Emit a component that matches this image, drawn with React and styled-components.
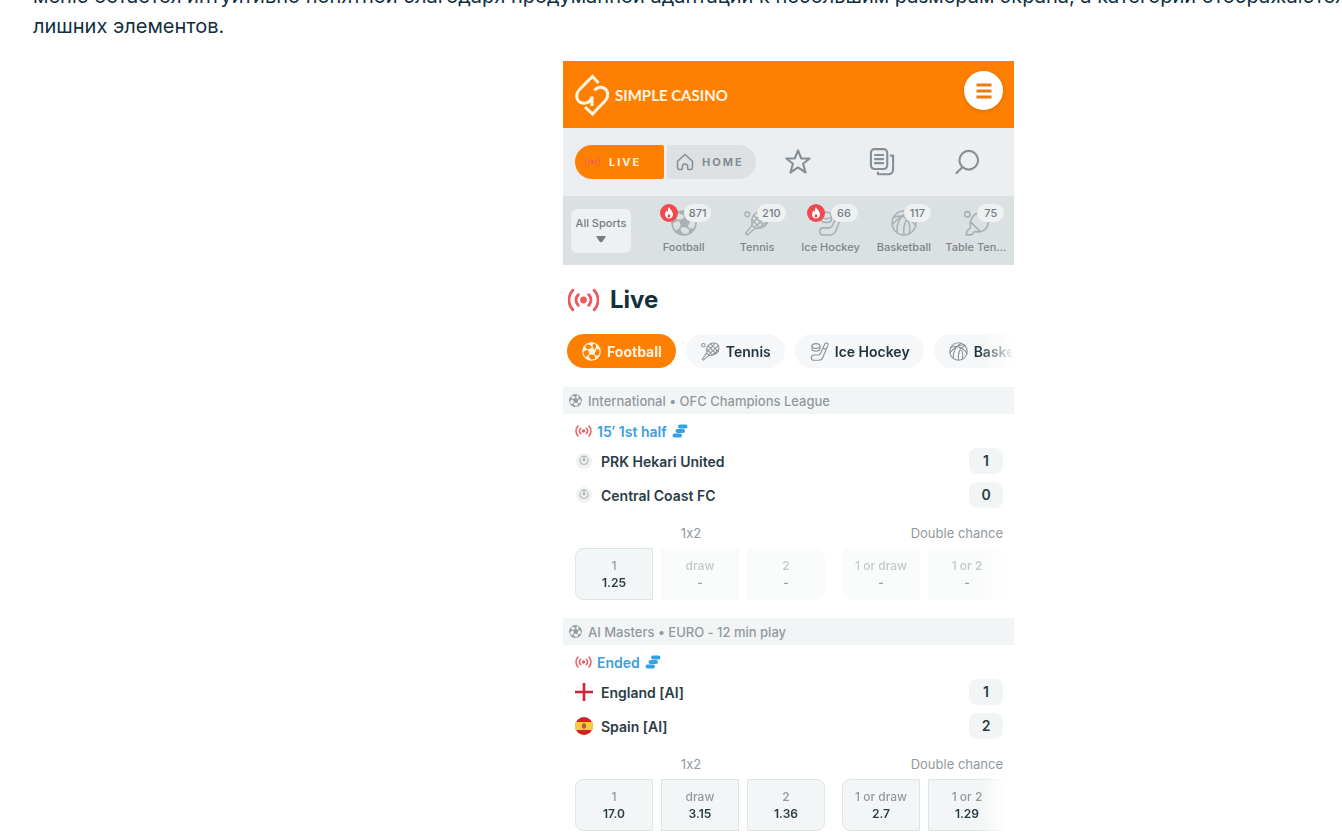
import styled, { createGlobalStyle } from "styled-components";
import React from "react";

const GlobalStyle = createGlobalStyle`
  * {
    box-sizing: border-box;
  }
  body {
    margin: 0;
    background: #ffffff;
    color: #10303f;
    font-family: "Inter", "Liberation Sans", sans-serif;
    font-feature-settings: "calt" 0;
    overflow: hidden;
  }
  button {
    font-family: inherit;
    border: none;
    padding: 0;
    cursor: pointer;
  }
  svg {
    display: block;
    flex-shrink: 0;
  }
`;

const Page = styled.main`
  height: 100vh;
  overflow: hidden;
`;

const Intro = styled.div`
  display: flex;
  align-items: flex-end;
  height: 41px;
  padding-left: 33px;
  overflow: hidden;
`;
const Paragraph = styled.p`
  margin: 0;
  font-size: 20px;
  line-height: 30px;
  color: #10303f;
  white-space: nowrap;
`;

const Figure = styled.figure`
  display: flex;
  justify-content: center;
  margin: 20px 0 0;
  padding-left: 235px;
`;
const Phone = styled.div`
  width: 100%;
  max-width: 451px;
  min-width: 0;
  overflow: hidden;
`;

/* top bar */
const Header = styled.header`
  display: flex;
  align-items: flex-start;
  justify-content: space-between;
  height: 67px;
  padding: 10px 11px 10px 12px;
  background: #ff8000;
`;
const Brand = styled.a`
  display: flex;
  align-items: center;
  gap: 6px;
  padding-top: 3px;
  color: #fff6e6;
  text-decoration: none;
  font-family: "Lato", sans-serif;
  font-size: 15px;
  font-weight: 700;
`;
const MenuButton = styled.button`
  display: flex;
  align-items: center;
  justify-content: center;
  width: 39px;
  height: 39px;
  border-radius: 50%;
  background: #ffffff;
  color: #e87d14;
  box-shadow: 0 1px 4px rgba(120, 60, 0, 0.3);
`;

/* live / home switch and tools */
const Nav = styled.nav`
  display: flex;
  align-items: center;
  height: 68px;
  padding: 0 5px 0 12px;
  background: #eceff1;
`;
const Switch = styled.div`
  display: flex;
  gap: 3px;
`;
const SwitchButton = styled.button`
  display: flex;
  align-items: center;
  gap: 8px;
  width: 89px;
  height: 34px;
  padding-left: 9px;
  font-size: 11px;
  font-weight: 700;
  letter-spacing: 2px;
  border-radius: ${(p) => (p.$active ? "18px 2px 2px 18px" : "2px 18px 18px 2px")};
  background: ${(p) => (p.$active ? "#ff8000" : "#dde1e4")};
  color: ${(p) => (p.$active ? "#fff3e0" : "#848d92")};
`;
const Tools = styled.div`
  display: grid;
  flex: 1;
  grid-template-columns: repeat(3, 1fr);
  justify-items: center;
`;
const ToolButton = styled.button`
  background: none;
  color: #858f95;
`;

/* sports strip */
const Sports = styled.div`
  display: flex;
  align-items: center;
  height: 69px;
  padding-left: 8px;
  background: #dbe0e3;
`;
const AllSports = styled.button`
  display: flex;
  flex-direction: column;
  align-items: center;
  gap: 5px;
  width: 60px;
  height: 44px;
  padding-top: 6px;
  margin-right: 16px;
  border-radius: 6px;
  background: #eef1f3;
  color: #757d82;
  font-size: 11px;
  font-weight: 500;
  line-height: 16px;
  white-space: nowrap;
`;
const Sport = styled.button`
  position: relative;
  display: flex;
  flex: 1;
  flex-direction: column;
  align-items: center;
  gap: 4px;
  min-width: 0;
  height: 69px;
  padding-top: 14px;
  background: none;
  color: #a8b0b4;
`;
const SportName = styled.span`
  max-width: 64px;
  overflow: hidden;
  font-size: 11px;
  font-weight: 500;
  line-height: 14px;
  color: #7d868b;
  text-overflow: ellipsis;
  white-space: nowrap;
`;
const Count = styled.span`
  position: absolute;
  top: 8px;
  left: 50%;
  min-width: 27px;
  padding: 0 5px;
  border-radius: 9px;
  background: #eef1f2;
  color: #757d82;
  font-size: 11px;
  font-weight: 500;
  line-height: 18px;
`;
const Hot = styled.span`
  position: absolute;
  top: 8px;
  right: 50%;
  display: flex;
  align-items: center;
  justify-content: center;
  width: 18px;
  height: 18px;
  margin-right: 6px;
  border-radius: 50%;
  background: #f04a50;
`;

/* live section */
const Title = styled.h1`
  display: flex;
  align-items: center;
  gap: 11px;
  height: 69px;
  margin: 0;
  padding-left: 5px;
  font-size: 24px;
  font-weight: 700;
  color: #12303d;
`;
const Pills = styled.div`
  display: flex;
  gap: 10px;
  padding: 0 0 19px 4px;
  overflow: hidden;
  mask-image: linear-gradient(to right, #000 calc(100% - 35px), transparent);
`;
const Pill = styled.button`
  display: flex;
  flex-shrink: 0;
  align-items: center;
  gap: 6px;
  height: 34px;
  padding: 0 14px 0 15px;
  border-radius: 17px;
  font-size: 14px;
  font-weight: ${(p) => (p.$active ? 700 : 600)};
  background: ${(p) => (p.$active ? "#ff8000" : "#f6f7f8")};
  color: ${(p) => (p.$active ? "#fff3e0" : "#21353f")};

  svg {
    color: ${(p) => (p.$active ? "#fff3e0" : "#8c9499")};
  }
`;

/* match */
const Match = styled.section`
  padding-bottom: 18px;
`;
const League = styled.h2`
  display: flex;
  align-items: center;
  gap: 6px;
  height: 27px;
  margin: 0;
  padding-left: 6px;
  background: #f2f5f5;
  color: #91999d;
  font-size: 13px;
  font-weight: 500;
`;
const Status = styled.div`
  display: flex;
  align-items: center;
  gap: 5px;
  height: 30px;
  padding: 4px 0 0 12px;
  color: #3c9de0;
  font-size: 14px;
  font-weight: 600;
`;
const Team = styled.div`
  display: flex;
  align-items: center;
  gap: 8px;
  height: 34px;
  padding: 0 11px 0 12px;
  color: #2a3c46;
  font-size: 14px;
  font-weight: 600;
`;
const Score = styled.span`
  width: 34px;
  margin-left: auto;
  border-radius: 8px;
  background: #f2f5f5;
  font-weight: 600;
  line-height: 26px;
  text-align: center;
`;
const Markets = styled.div`
  display: flex;
  align-items: center;
  justify-content: space-between;
  height: 36px;
  padding: 6px 11px 0 12px;
  color: #91999d;
  font-size: 13px;
`;
const Market = styled.span`
  &:first-child {
    width: 232px;
    text-align: center;
  }
`;
const Odds = styled.div`
  display: flex;
  gap: 17px;
  padding-left: 12px;
  overflow: hidden;
  mask-image: linear-gradient(to right, #000 calc(100% - 34px), transparent calc(100% - 8px));
`;
const OddsGroup = styled.div`
  display: flex;
  gap: 8px;
`;
const Odd = styled.button`
  display: flex;
  flex-shrink: 0;
  flex-direction: column;
  align-items: center;
  width: 78px;
  height: 52px;
  padding-top: 8px;
  border: 1px solid #dfe4e5;
  background: #f3f6f6;
  color: #91999d;
  font-size: 12px;
  font-weight: 500;
  line-height: 17px;

  strong {
    color: #2b3b43;
    font-weight: 600;
  }
  &:first-child {
    border-radius: 8px 0 0 8px;
  }
  &:last-child {
    border-radius: 0 8px 8px 0;
  }
  &:disabled {
    border-color: #fafbfb;
    background: #fafbfb;
    color: #c3c8ca;
  }
  &:disabled strong {
    color: #9ba2a5;
  }
`;

const Icon = ({ size = 18, children, ...rest }) => (
  <svg
    width={size}
    height={size}
    viewBox="0 0 24 24"
    fill="none"
    stroke="currentColor"
    strokeWidth="1.5"
    strokeLinecap="round"
    strokeLinejoin="round"
    aria-hidden="true"
    {...rest}
  >
    {children}
  </svg>
);

const FootballIcon = (props) => (
  <Icon {...props}>
    <circle cx="12" cy="12" r="11" />
    <g fill="currentColor">
      <path d="M13 7.500l3.500 3.500-1.800 4.500-4.900-.500L8.500 10z" />
      <path d="M7.500 2.200l6.500-1-1.500 3.300z" />
      <path d="M1.200 12L3 5.500l2.300 3.800z" />
      <path d="M22.500 9L19 3.800l-1 4.400z" />
      <path d="M4.500 20l3-2 3.500 4.800z" />
      <path d="M21.500 17.500l-4 .500-.500 3.800z" />
    </g>
    <path d="M12.500 4.500l.500 3M5.300 9.300l3.200.700M18 8.200L16.500 11M9.800 15l-2.300 3M14.700 15.500l2.800 2.500" />
  </Icon>
);

const TennisIcon = (props) => (
  <Icon {...props} strokeWidth="1.300">
    <circle cx="3" cy="4" r="2.200" />
    <path d="M9 4.500c3.500-4 9.500-4 12-1.500s2.500 8-1.500 11.500c-3 2.600-6.500 2.700-9.500 2.500L3 23l-1.500-1.500L7.500 14c-.500-3-.600-6.800 1.500-9.500z" />
    <path d="M7.500 14l2.500 3M12 2.500l9.500 9.500M9 5l10 10M7.500 9l7 7.500M18 1.800L8 12M21.500 4.500L10 16M22 9.500l-7.500 7" />
  </Icon>
);

const HockeyIcon = (props) => (
  <Icon {...props} strokeWidth="1.400">
    <ellipse cx="7.500" cy="5" rx="5" ry="3" />
    <path d="M2.500 5v3.500c0 4 10 4 10 0V5M19 2c1-1.500 4.500-.500 3.800 1.500L16.500 19c-1 2.500-2.500 4-5 4H5c-4.500 0-4.500-6.500 0-6.500h5c2 0 2.600-.500 3.200-2z" />
    <path d="M19.500 9l-3-1.200" />
  </Icon>
);

const BasketballIcon = (props) => (
  <Icon {...props} strokeWidth="1.400">
    <circle cx="12" cy="12" r="11" />
    <path d="M2 7c7-3 15-1 20.500 7M15 1.500C8 6 5 13 5.500 20.500M20 4.500C13 8 11 15 12 23M1.500 13C7 7 13 3 19 3.500M17 21.500c1-6-.500-12-4.500-15" />
  </Icon>
);

const PingPongIcon = (props) => (
  <Icon {...props}>
    <circle cx="3" cy="4" r="2.500" />
    <path d="M7 8c3-6 10-7 13.500-3.500S23 16 18 19c-3.500 2-6.500 1-8.500 1L7 23H2l1-4 3-2.500c-.500-2.500-.500-5.500 1-8.500z" />
    <path d="M6 11l9 9" />
  </Icon>
);

const SignalIcon = ({ width, height, strokeWidth = 3, ...rest }) => (
  <svg
    width={width}
    height={height}
    viewBox="0 0 32 24"
    fill="none"
    stroke="#ee5960"
    strokeWidth={strokeWidth}
    strokeLinecap="round"
    aria-hidden="true"
    {...rest}
  >
    <circle cx="16" cy="12" r="3.500" fill="#ee5960" stroke="none" />
    <path d="M10.500 6.500a8 8 0 0 0 0 11M21.500 6.500a8 8 0 0 1 0 11M5 2a14.500 14.500 0 0 0 0 20M27 2a14.500 14.500 0 0 1 0 20" />
  </svg>
);

const LogoIcon = () => (
  <svg width="34" height="42" viewBox="0 0 34 42" fill="none" stroke="currentColor" strokeWidth="3" aria-hidden="true">
    <path d="M23.500 9L17.500 2.500 4.500 15.500C0 20 1 28 7.500 29c5 .700 8.500-1.500 9.500-6.500V32" />
    <path d="M10 33l7.500 7L30 27c4-4 3.500-10.500-1-12.800-3.500-1.800-7.500-.700-9.500 2.300" />
  </svg>
);

const StatsIcon = () => (
  <svg width="16" height="14" viewBox="0 0 16 14" stroke="#32a1e5" strokeWidth="4" strokeLinecap="round" aria-hidden="true">
    <path d="M8 2.500h5.500M5.500 7h5.500M2.500 11.500h5.500" />
  </svg>
);

const FlameIcon = () => (
  <svg width="10" height="12" viewBox="0 0 10 12" aria-hidden="true">
    <path fill="#ffffff" d="M5 0c.300 2 4 4 4 7.500C9 10 7.200 11.500 5 11.500S1 10 1 7.500C1 5.800 2 4.500 2.700 3.500c.300 1 .700 1.300 1.200 1.500C3.700 3 4 1.200 5 0z" />
    <path fill="#f04a50" d="M5 6.500c.300 1 1.400 1.500 1.400 2.700a1.400 1.400 0 0 1-2.800 0C3.600 8 4.700 7.500 5 6.500z" />
  </svg>
);

const CrestIcon = () => (
  <svg width="18" height="18" viewBox="0 0 18 18" fill="none" stroke="#b4babd" strokeWidth="1.200" aria-hidden="true">
    <circle cx="9" cy="9" r="8" fill="#f0f2f2" stroke="none" />
    <path d="M5.500 6c-1.500 3 0 6.500 3.500 6.500s5-3.500 3.500-6.500M9 4v5.500M6 5l3-1 3 1" />
    <path d="M7.500 7l1.500-1 1.500 1v2h-3z" fill="#b8bec1" stroke="none" />
  </svg>
);

const EnglandFlag = () => (
  <svg width="18" height="18" viewBox="0 0 18 18" aria-hidden="true">
    <circle cx="9" cy="9" r="9" fill="#fbfafa" />
    <path d="M9 0v18M0 9h18" stroke="#d5203c" strokeWidth="2.600" />
  </svg>
);

const SpainFlag = () => (
  <svg width="18" height="18" viewBox="0 0 18 18" aria-hidden="true">
    <circle cx="9" cy="9" r="9" fill="#d3202b" />
    <path d="M.900 5h16.200a9 9 0 0 1 0 8H.900a9 9 0 0 1 0-8z" fill="#fbc935" />
    <path d="M7 7.500l2-1.500 2 1.500v3L9 12l-2-1.500z" fill="#a8652b" />
  </svg>
);

const sports = [
  { name: "Football", count: 871, hot: true, icon: FootballIcon },
  { name: "Tennis", count: 210, icon: TennisIcon },
  { name: "Ice Hockey", count: 66, hot: true, icon: HockeyIcon },
  { name: "Basketball", count: 117, icon: BasketballIcon },
  { name: "Table Tennis", count: 75, icon: PingPongIcon },
];

const matches = [
  {
    league: "International • OFC Champions League",
    status: "15′ 1st half",
    teams: [
      { name: "PRK Hekari United", score: 1, icon: CrestIcon },
      { name: "Central Coast FC", score: 0, icon: CrestIcon },
    ],
    odds: [
      [["1", "1.25"], ["draw", "-"], ["2", "-"]],
      [["1 or draw", "-"], ["1 or 2", "-"]],
    ],
  },
  {
    league: "AI Masters • EURO - 12 min play",
    status: "Ended",
    teams: [
      { name: "England [AI]", score: 1, icon: EnglandFlag },
      { name: "Spain [AI]", score: 2, icon: SpainFlag },
    ],
    odds: [
      [["1", "17.0"], ["draw", "3.15"], ["2", "1.36"]],
      [["1 or draw", "2.7"], ["1 or 2", "1.29"]],
    ],
  },
];

const MatchCard = ({ match }) => (
  <Match>
    <League>
      <FootballIcon size={13} />
      {match.league}
    </League>
    <Status>
      <SignalIcon width={17} height={12} />
      {match.status}
      <StatsIcon />
    </Status>
    {match.teams.map(({ name, score, icon: TeamIcon }) => (
      <Team key={name}>
        <TeamIcon />
        {name}
        <Score>{score}</Score>
      </Team>
    ))}
    <Markets>
      <Market>1x2</Market>
      <Market>Double chance</Market>
    </Markets>
    <Odds>
      {match.odds.map((group, i) => (
        <OddsGroup key={i}>
          {group.map(([label, value]) => (
            <Odd key={label} disabled={value === "-"}>
              {label}
              <strong>{value}</strong>
            </Odd>
          ))}
        </OddsGroup>
      ))}
    </Odds>
  </Match>
);

const App = () => {
  return (
    <Page>
      <GlobalStyle />
      <Intro>
        <Paragraph>
          меню остается интуитивно понятной благодаря продуманной адаптации к небольшим размерам экрана, а категории отображаются
          <br />
          лишних элементов.
        </Paragraph>
      </Intro>
      <Figure>
        <Phone>
          <Header>
            <Brand href="#">
              <LogoIcon />
              SIMPLE CASINO
            </Brand>
            <MenuButton aria-label="Menu">
              <Icon size={18} strokeWidth="4" strokeLinecap="butt">
                <path d="M2 4h20M2 12h20M2 20h20" />
              </Icon>
            </MenuButton>
          </Header>
          <Nav>
            <Switch>
              <SwitchButton $active>
                <SignalIcon width={17} height={12} strokeWidth={2} />
                LIVE
              </SwitchButton>
              <SwitchButton>
                <Icon size={18} strokeWidth="2">
                  <path d="M2 11L12 2l10 9v8a3 3 0 0 1-3 3h-2c-1 0-1.500-.500-1.500-1.500V18a3.500 3.500 0 0 0-7 0v2.500c0 1-.500 1.500-1.500 1.500H5a3 3 0 0 1-3-3z" />
                </Icon>
                HOME
              </SwitchButton>
            </Switch>
            <Tools>
              <ToolButton aria-label="Favourites">
                <Icon size={28} strokeWidth="1.800">
                  <path d="M12 2l2.800 7H22l-5.700 4.500 2.200 7.500-6.500-4.300L5.500 21l2.200-7.500L2 9h7.200z" />
                </Icon>
              </ToolButton>
              <ToolButton aria-label="Bets">
                <Icon size={28} strokeWidth="1.800">
                  <rect x="2.500" y="1" width="14" height="17" rx="3" />
                  <path d="M6 6h7M6 9.500h7M6 13h7M19.500 6.500h2v12a4 4 0 0 1-4 4h-9v-1.500" />
                </Icon>
              </ToolButton>
              <ToolButton aria-label="Search">
                <Icon size={28} strokeWidth="1.800">
                  <circle cx="13.500" cy="10.500" r="8" />
                  <path d="M8 16.500L3 21.500" />
                </Icon>
              </ToolButton>
            </Tools>
          </Nav>
          <Sports>
            <AllSports>
              All Sports
              <svg width="10" height="7" viewBox="0 0 10 7" aria-hidden="true">
                <path d="M1 0h8q1 0 .500 1L6.500 5.500q-1.500 1.500-3 0L.500 1Q0 0 1 0z" fill="currentColor" />
              </svg>
            </AllSports>
            {sports.map(({ name, count, hot, icon: SportIcon }) => (
              <Sport key={name}>
                <SportIcon size={26} />
                {hot && (
                  <Hot>
                    <FlameIcon />
                  </Hot>
                )}
                <Count>{count}</Count>
                <SportName>{name}</SportName>
              </Sport>
            ))}
          </Sports>
          <Title>
            <SignalIcon width={31} height={24} />
            Live
          </Title>
          <Pills>
            {sports.slice(0, 4).map(({ name, icon: SportIcon }, i) => (
              <Pill key={name} $active={i === 0}>
                <SportIcon size={19} />
                {name}
              </Pill>
            ))}
          </Pills>
          {matches.map((match) => (
            <MatchCard key={match.league} match={match} />
          ))}
        </Phone>
      </Figure>
    </Page>
  );
};

export default App;
